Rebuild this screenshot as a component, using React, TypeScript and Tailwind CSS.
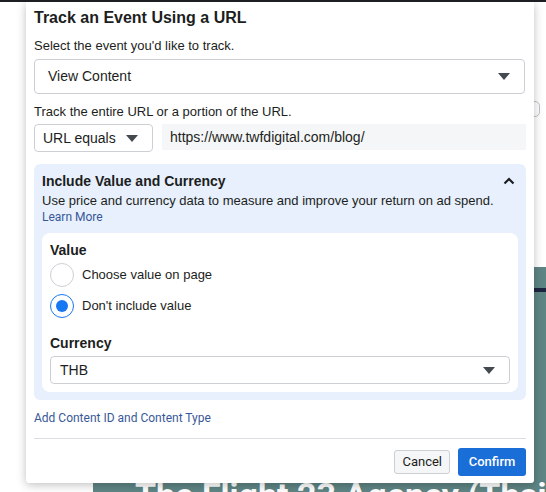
import React, { useState } from 'react';

const Caret = () => (
  <svg width="12" height="7" viewBox="0 0 12 7" className="shrink-0">
    <path d="M0 0 H12 L6 7 Z" fill="#444950" />
  </svg>
);

const Radio = ({ checked, label, onClick }: { checked: boolean; label: string; onClick: () => void }) => (
  <button onClick={onClick} className="flex items-center gap-2 text-left">
    <span
      className={`w-6 h-6 rounded-full flex items-center justify-center bg-white ${
        checked ? 'border-[1.5px] border-[#1877f2]' : 'border border-[#ccd0d5]'
      }`}
    >
      {checked && <span className="w-3 h-3 rounded-full bg-[#1877f2]" />}
    </span>
    <span className="text-[13px] leading-4 text-[#1c1e21]">{label}</span>
  </button>
);

export default function App() {
  const [valueMode, setValueMode] = useState<'page' | 'none'>('none');

  return (
    <div className="relative w-[546px] h-[492px] overflow-hidden bg-white border-t-2 border-[#1c1e21] font-['Liberation_Sans',Arial,sans-serif]">
      {/* page behind the dialog */}
      <div className="absolute left-[524px] top-[99px] w-[16px] h-[16px] rounded-[5px] border-[1.5px] border-[#bec3c9]" />
      <div className="absolute left-[93px] top-[265px] right-0 bottom-0 bg-[#5e8584] overflow-hidden">
        <div className="mt-[21px] h-[4px] bg-[#1c2440]" />
        <p className="absolute left-[42px] top-[208px] whitespace-nowrap text-[34px] leading-[40px] font-bold text-white font-['Roboto',sans-serif]">
          The Flight 23 Agency (Thailand)
        </p>
      </div>

      {/* dialog */}
      <div className="absolute left-[26px] top-0 w-[508px] h-[481px] bg-white rounded-b-[3px] shadow-[0_2px_10px_rgba(0,0,0,0.25)] px-2 pt-[6px] flex flex-col">
        <h1 className="text-[16px] leading-5 font-bold text-[#1c1e21]">Track an Event Using a URL</h1>
        <p className="mt-[10px] text-[13px] leading-4 text-[#1c1e21]">Select the event you'd like to track.</p>
        <button className="mt-[5px] h-[35px] w-[491px] flex items-center justify-between pl-[13px] pr-[14px] border border-[#ccd0d5] rounded-[4px] bg-white">
          <span className="text-[14px] text-[#1c1e21]">View Content</span>
          <Caret />
        </button>

        <p className="mt-[10px] text-[13px] leading-4 text-[#1c1e21]">Track the entire URL or a portion of the URL.</p>
        <div className="mt-[4px] flex items-start gap-[9px]">
          <button className="h-[28px] w-[119px] flex items-center justify-between pl-[8px] pr-[14px] border border-[#ccd0d5] rounded-[4px] bg-white">
            <span className="text-[14px] text-[#1c1e21]">URL equals</span>
            <Caret />
          </button>
          <div className="h-[26px] w-[364px] bg-[#f5f6f7] flex items-center px-2 text-[14px] text-[#1c1e21]">
            https://www.twfdigital.com/blog/
          </div>
        </div>

        <div className="mt-[12px] w-[492px] bg-[#e7f0fc] rounded-[6px] px-2 pt-[8px] pb-[8px]">
          <div className="flex items-center justify-between">
            <h2 className="text-[14px] leading-[18px] font-bold text-[#1c1e21]">Include Value and Currency</h2>
            <svg width="12" height="8" viewBox="0 0 12 8" className="mr-[3px]">
              <path d="M1.5 6.5 L6 2 L10.5 6.5" stroke="#1c1e21" strokeWidth="2.2" fill="none" />
            </svg>
          </div>
          <p className="mt-[3px] text-[13px] leading-4 text-[#1c1e21]">
            Use price and currency data to measure and improve your return on ad spend.
          </p>
          <a className="block text-[12px] leading-4 text-[#385898] font-['Roboto',sans-serif]">Learn More</a>

          <div className="mt-[8px] bg-white rounded-[8px] px-2 pt-[8px] pb-[8px]">
            <h3 className="text-[14px] leading-[18px] font-bold text-[#1c1e21]">Value</h3>
            <div className="mt-[4px] flex flex-col gap-[7px]">
              <Radio checked={valueMode === 'page'} label="Choose value on page" onClick={() => setValueMode('page')} />
              <Radio checked={valueMode === 'none'} label="Don't include value" onClick={() => setValueMode('none')} />
            </div>
            <h3 className="mt-[16px] text-[14px] leading-[18px] font-bold text-[#1c1e21]">Currency</h3>
            <button className="mt-[4px] h-[28px] w-[460px] flex items-center justify-between pl-[9px] pr-[14px] border border-[#ccd0d5] rounded-[4px] bg-white">
              <span className="text-[14px] text-[#1c1e21]">THB</span>
              <Caret />
            </button>
          </div>
        </div>

        <a className="mt-[10px] text-[12px] leading-4 text-[#385898] font-['Roboto',sans-serif]">Add Content ID and Content Type</a>
        <div className="mt-[12px] h-px w-[492px] bg-[#dadde1]" />

        <div className="mt-[9px] w-[492px] flex items-center justify-end gap-[8px]">
          <button className="h-[24px] px-[7px] border border-[#ccd0d5] rounded-[3px] bg-[#f5f6f7] text-[13px] text-[#1c1e21] font-['Roboto',sans-serif]">
            Cancel
          </button>
          <button className="h-[28px] w-[68px] rounded-[3px] bg-[#1a6ed8] text-[13px] font-medium text-white font-['Roboto',sans-serif]">
            Confirm
          </button>
        </div>
      </div>
    </div>
  );
}
